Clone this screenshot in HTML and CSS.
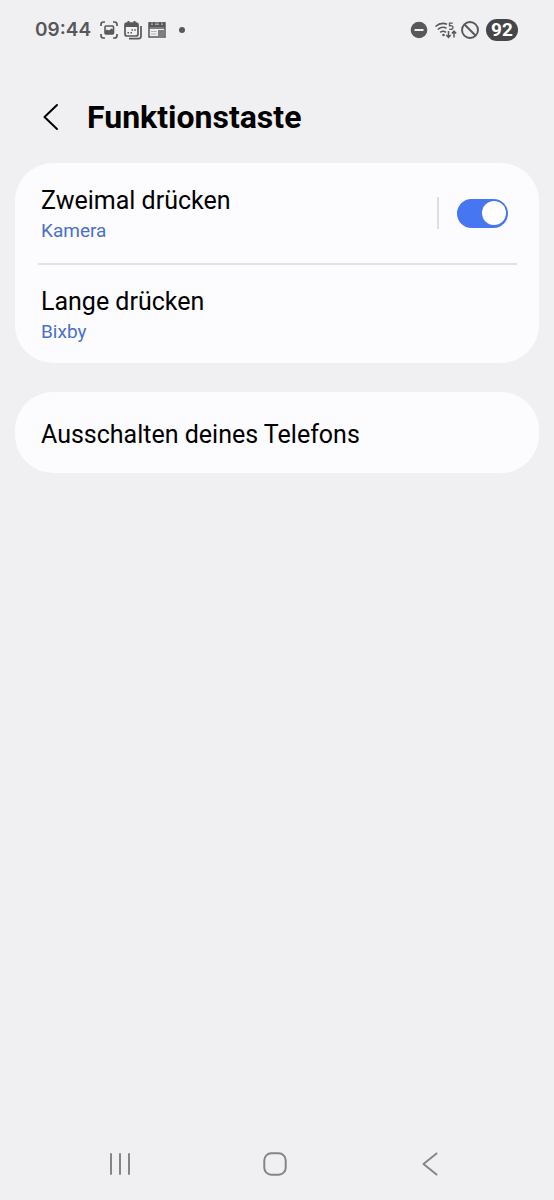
FILE: index.html
```html
<!DOCTYPE html>
<html lang="de">
<head>
<meta charset="utf-8">
<meta name="viewport" content="width=device-width, initial-scale=1">
<title>Funktionstaste</title>
<link rel="stylesheet" href="styles.css">
</head>
<body>
<div class="statusbar">
  <span class="clock">09:44</span>
  <div class="notifications">
    <svg width="20" height="20" viewBox="0 0 20 20" fill="none" stroke="currentColor" stroke-width="1.700" aria-hidden="true">
      <path d="M2 6V4.500Q2 2 4.500 2H6M14 2h1.500Q18 2 18 4.500V6M18 14v1.500Q18 18 15.500 18H14M6 18H4.500Q2 18 2 15.500V14"/>
      <rect x="6" y="6" width="8.500" height="8" rx="1" stroke-width="1.600"/>
      <path d="M6 14v-3l2-1.500 2 1 2.500-2 2 1.500V14z" fill="currentColor" stroke="none"/>
    </svg>
    <svg width="20" height="20" viewBox="0 0 20 20" fill="none" stroke="currentColor" stroke-width="1.700" aria-hidden="true">
      <rect x="2" y="3" width="13" height="13" rx="2"/>
      <path d="M2 3h13v4H2zM4.500 1h2v3h-2zM10.500 1h2v3h-2z" fill="currentColor" stroke="none"/>
      <path d="M18 6v10q0 2.700-2.700 2.700H6"/>
      <path d="M8.500 10h1.500M11.300 10h1.500M4.500 12.800H6M7.500 12.800H9" stroke-width="1.400"/>
    </svg>
    <svg width="20" height="20" viewBox="0 0 20 20" fill="none" stroke="currentColor" stroke-width="1.500" aria-hidden="true">
      <path d="M2 3h16v14H2zM2 8h16"/>
      <path d="M2 4.500h16v2.500H2zM2 2h2v3H2zM6 2h2v3H6zM12 2h2v3h-2zM16 2h2v3h-2z" fill="currentColor" stroke="none"/>
      <path d="M11 10h6v6h-6z" fill="currentColor" stroke="none" opacity=".75"/>
      <path d="M4 11.500h5.500M4 14h5.500" stroke-width="1" opacity=".4"/>
    </svg>
    <span class="more-dot"></span>
  </div>
  <div class="system">
    <svg width="18" height="18" viewBox="0 0 18 18" aria-hidden="true">
      <circle cx="9" cy="9" r="8.300" fill="currentColor"/>
      <path d="M4.500 9h9" stroke="#f0f0f2" stroke-width="2"/>
    </svg>
    <svg class="wifi" width="24" height="20" viewBox="0 0 24 20" fill="none" stroke="currentColor" stroke-width="1.600" aria-hidden="true">
      <path d="M1.500 6.500Q7 1.800 13 4.300M3.800 9.500Q8 5.800 12.500 8.300M6.200 12.300Q9 10.300 12 12.300"/>
      <circle cx="9.500" cy="15" r="1.300" fill="currentColor" stroke="none"/>
      <path d="M18.800 3.200h-3.300v2.600q3.500-.500 3.500 1.800t-3.800 1.600" stroke-width="1.300"/>
      <path d="M14.500 11v6M12.300 15l2.200 2.300 2.200-2.300M20 17.500v-6M17.800 13.500l2.200-2.300 2.200 2.300" stroke-width="1.500"/>
    </svg>
    <svg width="20" height="20" viewBox="0 0 20 20" fill="none" stroke="currentColor" stroke-width="1.900" aria-hidden="true">
      <circle cx="10" cy="10" r="8"/>
      <path d="M4.500 4.500l11 11"/>
    </svg>
    <span class="battery">92</span>
  </div>
</div>

<header class="header">
  <button class="back" aria-label="Zurück">
    <svg width="18" height="28" viewBox="0 0 18 28" fill="none" stroke="currentColor" stroke-width="2" stroke-linecap="round" stroke-linejoin="round" aria-hidden="true"><path d="M15 2L2.500 14 15 26"/></svg>
  </button>
  <h1 class="title">Funktionstaste</h1>
</header>

<main class="settings">
  <section class="card">
    <div class="row">
      <a class="entry" href="#zweimal"><span class="label" id="double-label">Zweimal drücken</span><span class="value">Kamera</span></a>
      <span class="separator"></span>
      <input class="switch" type="checkbox" role="switch" aria-labelledby="double-label" checked>
    </div>
    <div class="row">
      <a class="entry" href="#lange"><span class="label">Lange drücken</span><span class="value">Bixby</span></a>
    </div>
  </section>
  <section class="card">
    <div class="row row-single">
      <a class="entry" href="#ausschalten"><span class="label">Ausschalten deines Telefons</span></a>
    </div>
  </section>
</main>

<nav class="navbar" aria-label="Navigation">
  <button class="nav-button" aria-label="Letzte Apps">
    <svg width="24" height="24" viewBox="0 0 24 24" fill="none" stroke="currentColor" stroke-width="2" stroke-linecap="round" aria-hidden="true"><path d="M3 2v20M12 2v20M21 2v20"/></svg>
  </button>
  <button class="nav-button" aria-label="Startseite">
    <svg width="24" height="24" viewBox="0 0 24 24" fill="none" stroke="currentColor" stroke-width="2" aria-hidden="true"><rect x="1.300" y="1.300" width="21.400" height="21.400" rx="7"/></svg>
  </button>
  <button class="nav-button" aria-label="Zurück">
    <svg width="24" height="24" viewBox="0 0 24 24" fill="none" stroke="currentColor" stroke-width="2" stroke-linecap="round" stroke-linejoin="round" aria-hidden="true"><path d="M18.500 1.500L5.500 12l13 10.500"/></svg>
  </button>
</nav>
</body>
</html>
```

FILE: styles.css
```css
* {
  box-sizing: border-box;
}

body {
  margin: 0;
  min-height: 100vh;
  display: flex;
  flex-direction: column;
  background: #f0f0f3;
  color: #000;
  font-family: Roboto, "Liberation Sans", sans-serif;
}

button {
  padding: 0;
  border: 0;
  background: none;
  color: inherit;
  font: inherit;
}

svg {
  display: block;
  flex: none;
}

.statusbar {
  display: flex;
  align-items: center;
  height: 60px;
  padding: 0 36px 0 35px;
  color: #58585a;
}

.clock {
  font-family: Inter, Roboto, sans-serif;
  font-size: 19px;
  font-weight: 600;
  line-height: 24px;
}

.notifications {
  display: flex;
  align-items: center;
  gap: 4px;
  margin-left: 8px;
}

.more-dot {
  width: 6px;
  height: 6px;
  margin-left: 8px;
  border-radius: 50%;
  background: currentColor;
}

.system {
  display: flex;
  align-items: center;
  gap: 6px;
  margin-left: auto;
}

.wifi {
  margin-right: -4px;
}

.battery {
  width: 32px;
  border-radius: 11px;
  background: #464648;
  color: #fff;
  font-size: 19px;
  font-weight: 700;
  line-height: 22px;
  text-align: center;
}

.header {
  display: flex;
  align-items: center;
  gap: 27px;
  height: 103px;
  padding: 11px 42px 0;
}

.back {
  flex: none;
}

.title {
  margin: 0;
  font-size: 32px;
  font-weight: 700;
  line-height: 36px;
}

.settings {
  display: flex;
  flex-direction: column;
  gap: 29px;
  padding: 0 15px;
}

.card {
  border-radius: 38px;
  background: #fcfcfe;
}

.row {
  display: flex;
  align-items: center;
  min-height: 100px;
  padding: 0 31px 0 26px;
}

.row + .row::before {
  content: "";
  align-self: flex-start;
  width: calc(100% + 12px);
  height: 2px;
  margin: 0 -9px 0 -3px;
  flex: none;
  background: #e2e2e4;
}

.row + .row {
  flex-direction: column;
  align-items: stretch;
}

.row-single {
  min-height: 81px;
}

.entry {
  flex: 1;
  display: flex;
  flex-direction: column;
  justify-content: center;
  padding-top: 4px;
  color: inherit;
  text-decoration: none;
}

.label {
  font-size: 25px;
  line-height: 32px;
}

.value {
  color: #4a70c8;
  font-size: 19px;
  line-height: 28px;
}

.separator {
  width: 2px;
  height: 32px;
  margin-right: 18px;
  background: #dedee0;
}

.switch {
  appearance: none;
  display: flex;
  align-items: center;
  justify-content: flex-start;
  width: 51px;
  height: 29px;
  margin: 0;
  padding: 0 2px;
  border-radius: 15px;
  background: #a0a0a4;
}

.switch::before {
  content: "";
  width: 24px;
  height: 24px;
  border-radius: 50%;
  background: #fff;
}

.switch:checked {
  justify-content: flex-end;
  background: #4676f2;
}

.navbar {
  display: flex;
  height: 72px;
  margin-top: auto;
  padding: 0 46px 0 42px;
  color: #858587;
}

.nav-button {
  flex: 1;
  display: flex;
  align-items: center;
  justify-content: center;
}
```
